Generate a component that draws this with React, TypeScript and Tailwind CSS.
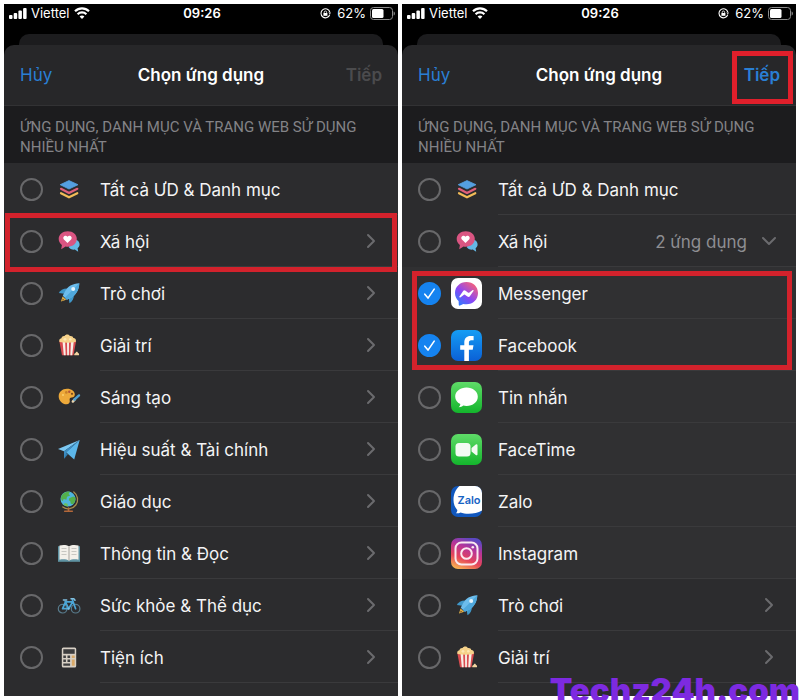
import React, { useState } from 'react';
import { ChevronDown, ChevronRight } from 'lucide-react';

type IconName =
  | 'layers' | 'social' | 'rocket' | 'popcorn' | 'palette' | 'plane' | 'globe' | 'book' | 'bike' | 'calculator'
  | 'messenger' | 'facebook' | 'messages' | 'facetime' | 'zalo' | 'instagram';

interface Item {
  icon: IconName;
  label: string;
  chevron?: 'right' | 'down';
  detail?: string;
  checked?: boolean;
  app?: boolean;
  highlighted?: boolean;
}

// 24x24 emoji style glyphs
const emojis: Partial<Record<IconName, React.ReactNode>> = {
  layers: (
    <>
      <path d="M4 16.2 12 20.3l8.3-4.1" fill="none" stroke="#f2bc57" strokeWidth="2.2" strokeLinecap="round" strokeLinejoin="round" />
      <path d="M4 11.8 12 16l8.3-4.2" fill="none" stroke="#e0607a" strokeWidth="2.2" strokeLinecap="round" strokeLinejoin="round" />
      <path d="M12 3.6 21 7.7 12 12 3.2 7.7z" fill="#549fe0" stroke="#549fe0" strokeWidth="0.8" strokeLinejoin="round" />
    </>
  ),
  social: (
    <>
      <path d="M18.5 10.5c3 .8 4.6 3.6 4 6-.3 1.2-1 2.1-1.9 2.7l.6 3.5-3.4-2.1c-2.6.3-5.2-.7-6.2-2.6z" fill="#64b9e6" />
      <path d="M10.8 2.3c5.2 0 9 3.3 9 7.7s-3.8 7.7-9 7.7c-.8 0-1.5-.1-2.2-.2L4.2 20.3l.7-4.4C2.9 14.5 1.7 12.4 1.7 10c0-4.4 3.9-7.7 9.1-7.7z" fill="#da5582" />
      <path d="M10.5 14 6.9 10.4C4.8 8 8.6 5.2 10.5 7.7c1.9-2.5 5.7.3 3.6 2.7z" fill="#fff" />
    </>
  ),
  rocket: (
    <>
      <path d="M10 7.5C6 7.5 3.2 9.5 1.8 12l5.4.8z" fill="#3f97c9" />
      <path d="M16.8 14c.3 3.5-1.5 6.5-4.3 8.3l-.8-5.2z" fill="#3f97c9" />
      <path d="M22.3 2.2C15.5 2.4 10.5 5.4 7.6 11l-1.8 3.7 4 4L13.6 17c5.5-3 8.4-8 8.7-14.8z" fill="#6cbdec" />
      <path d="M22.3 2.2c-.3 6.8-3.2 11.8-8.7 14.8l-3.8 1.7-2-2z" fill="#4fa8dc" />
      <circle cx="16.2" cy="8.1" r="2" fill="#e4f3fb" />
      <path d="M5.5 15.5 4 20.5l5.2-1.7z" fill="#e9b94b" />
      <path d="m5.7 17.5-.8 2.2 2.5-.9z" fill="#8a5b2a" />
    </>
  ),
  popcorn: (
    <>
      <path d="M2.3 8h16.8l-2.6 14.2H5z" fill="#d94b4f" />
      <path d="m5.5 8 1.3 14.2h1.9L8.1 8zM10 8l.2 14.2h1.7L12 8zM14 8l-.7 14.2h1.9L16.8 8z" fill="#f7eee6" />
      <path d="M2.6 9.1c-1-2 0-3.7 1.8-3.9C4.8 3.3 6.3 2.7 7.6 3c.8-1.8 4-2.2 5.2 0 1.9-.4 3.3.6 3.5 2.1 2.2.1 3.4 2.1 2.3 4-5 .9-11 .9-16 0z" fill="#f6d28a" />
      <circle cx="8" cy="6.3" r="1.4" fill="#fde7b4" />
      <circle cx="13.3" cy="6.2" r="1.3" fill="#fde7b4" />
      <path d="M17.3 22.2c-.4-1.5.4-2.2 1.3-2.3.2-1.7 2.3-1.5 2.3 0 1.2.2 1.5 1.3 1 2.3z" fill="#f3d4a0" />
    </>
  ),
  palette: (
    <>
      <path d="M10 3.8c4.6 0 7.8 2.5 7.8 5.8 0 2-1.3 2.8-3 2.8-1.9 0-2.5 1.3-2.1 2.9.6 2.1-.7 4-3.2 4-4 0-7.8-3.5-7.8-7.8C1.7 7 5.3 3.8 10 3.8z" fill="#eda93a" />
      <circle cx="12.3" cy="6.8" r="1.2" fill="#b4553a" />
      <circle cx="9.3" cy="7.4" r="1.3" fill="#c8812a" />
      <circle cx="15" cy="8.8" r="1.1" fill="#7a4a20" />
      <circle cx="6" cy="10" r="1.1" fill="#f8cd6b" />
      <path d="m15.8 16.6 2.2-2.5" stroke="#e9d5b0" strokeWidth="2.4" strokeLinecap="round" />
      <path d="m17.3 14.7 4.7-4.3" stroke="#4c9fd2" strokeWidth="2.4" strokeLinecap="round" />
    </>
  ),
  plane: (
    <>
      <path d="m7 13.5.2 8.2 3.6-4.3z" fill="#2f7cae" />
      <path d="M22.7 3 1 12l6 2.3z" fill="#7cc8f2" />
      <path d="M22.7 3 9 15.3l8.2 7.2z" fill="#5cb7ea" />
      <path d="M22.7 3 7 14.3l.2 7.4 2.2-6.2z" fill="#3c8dc2" />
    </>
  ),
  globe: (
    <>
      <path d="M16.8 3a9.3 9.3 0 0 1-11 15" fill="none" stroke="#a58b4c" strokeWidth="1.3" strokeLinecap="round" />
      <circle cx="11" cy="10" r="7.5" fill="#4fb5dc" />
      <path d="M5 6c2-2.8 5.5-4 8-3.3l-1.5 2.4 1.7 1.5-3.2 1.2-.6 3-2.7-.7-1.2 2.2C3.6 10.5 3.7 8 5 6z" fill="#53b04c" />
      <path d="m12.2 9.2 4-1.6 2.2 1c.4 2.3-.4 4.9-2.4 6.7l-2.2-.5-.5-2.6-1.5-1z" fill="#53b04c" />
      <path d="m8 14 2.5.8.5 2.6c-1.7 0-3.5-.7-4.6-1.8z" fill="#6ac05d" />
      <path d="M11.5 19v2.5M7.7 22.2h7.6" stroke="#b3683a" strokeWidth="1.6" strokeLinecap="round" />
    </>
  ),
  book: (
    <>
      <path d="M1 5.2h22v15.6H1z" fill="#5f93a3" />
      <path d="M2.5 4.5c3.5-1 7-.8 9.5.8 2.5-1.6 6-1.8 9.5-.8v14.3c-3.5-.8-7-.6-9.5.9-2.5-1.5-6-1.7-9.5-.9z" fill="#f3f0ea" />
      <path d="M12 5.3v14.4" stroke="#a6a39d" strokeWidth="1" />
      <path d="M4.5 7.5h5M4.5 10.5h5M4.5 13.5h5M14.5 7.5h5M14.5 10.5h5M14.5 13.5h5" stroke="#bdbcb8" strokeWidth="0.8" />
    </>
  ),
  bike: (
    <g fill="none" strokeLinecap="round" strokeLinejoin="round">
      <circle cx="5.6" cy="15.7" r="4.3" stroke="#587b8c" strokeWidth="1.2" />
      <circle cx="18.6" cy="15.7" r="4.3" stroke="#587b8c" strokeWidth="1.2" />
      <path d="m5.6 15.7 2.9-6.9h7.3l-4.2 6.9zM8.2 8.3l3.4 7.4M18.6 15.7 15.3 6.5" stroke="#4ba6d7" strokeWidth="1.7" />
      <path d="M6.4 7h3.3M14 5.7h2.8l1.2 1.6" stroke="#80bfe0" strokeWidth="1.5" />
      <circle cx="11.6" cy="15.7" r="1.1" fill="#80bfe0" />
    </g>
  ),
  calculator: (
    <>
      <rect x="4.8" y="2.5" width="14.4" height="20" rx="1.5" fill="#d8d0c5" />
      <rect x="6.3" y="4.2" width="11.4" height="4.6" fill="#3c3c3d" />
      <path d="M6.3 10.6h2.6V13H6.3zM10.5 10.6h2.6V13h-2.6zM6.3 14.5h2.6v2.4H6.3zM10.5 14.5h2.6v2.4h-2.6zM6.3 18.4h6.8v2.3H6.3z" fill="#404041" />
      <path d="M14.8 10.6h2.9V13h-2.9zM14.8 14.5h2.9v6.2h-2.9z" fill="#d9a968" />
    </>
  ),
};

// 31x31 app tiles
const apps: Partial<Record<IconName, React.ReactNode>> = {
  messenger: (
    <>
      <linearGradient id="msgr" x1="0" y1="1" x2="0.8" y2="0">
        <stop offset="0" stopColor="#1689ff" />
        <stop offset="0.5" stopColor="#8a46f5" />
        <stop offset="1" stopColor="#fb6275" />
      </linearGradient>
      <rect width="31" height="31" rx="7" fill="#fff" />
      <path d="M15.5 4C9 4 4 8.7 4 15c0 3.3 1.4 6.2 3.6 8.1l.2 3.8c0 .6.6 1 1.2.7l3.3-1.7c1 .3 2.1.4 3.2.4C22 26.3 27 21.4 27 15S22 4 15.5 4z" fill="url(#msgr)" />
      <path d="m8.4 18.6 3.6-5.3a1.8 1.8 0 0 1 2.6-.5l2.6 1.9c.3.2.6.2.9 0l3.6-2.6c.6-.4 1.1.2.8.8L19 18.1a1.8 1.8 0 0 1-2.6.5l-2.5-1.9a.8.8 0 0 0-.9 0l-3.7 2.7c-.6.4-1.3-.2-.9-.8z" fill="#fff" />
    </>
  ),
  facebook: (
    <>
      <linearGradient id="fb" x1="0" y1="0" x2="0" y2="1">
        <stop offset="0" stopColor="#159df4" />
        <stop offset="1" stopColor="#0b60d6" />
      </linearGradient>
      <rect width="31" height="31" rx="7" fill="url(#fb)" />
      <path d="M13.3 31V19.8H9.2v-4.6h4.1v-2.7c0-4.3 2.3-6.6 6.2-6.6 1.3 0 2.5.1 3.1.2v4.2h-2.3c-1.8 0-2.4.9-2.4 2.5v2.4h4.6l-.8 4.6h-3.8V31z" fill="#fff" />
    </>
  ),
  messages: (
    <>
      <linearGradient id="sms" x1="0" y1="0" x2="0" y2="1">
        <stop offset="0" stopColor="#5fdb68" />
        <stop offset="1" stopColor="#13b52c" />
      </linearGradient>
      <rect width="31" height="31" rx="7" fill="url(#sms)" />
      <path d="M15.5 5.5c6.4 0 11.3 4 11.3 9.2s-4.9 9.2-11.3 9.2c-1.2 0-2.3-.1-3.3-.4-1 .9-2.6 1.7-4.5 1.8 1-.9 1.6-2.1 1.6-3.2-3.1-1.6-5.1-4.3-5.1-7.4 0-5.2 4.9-9.2 11.3-9.2z" fill="#fff" />
    </>
  ),
  facetime: (
    <>
      <linearGradient id="ft" x1="0" y1="0" x2="0" y2="1">
        <stop offset="0" stopColor="#5fdb68" />
        <stop offset="1" stopColor="#13b52c" />
      </linearGradient>
      <rect width="31" height="31" rx="7" fill="url(#ft)" />
      <rect x="4.5" y="9" width="15" height="13.5" rx="3.5" fill="#f3fbf3" />
      <path d="m20.5 14 4.3-3.5c.8-.7 1.7-.3 1.7.7v9c0 1-.9 1.4-1.7.7l-4.3-3.4z" fill="#f3fbf3" />
    </>
  ),
  zalo: (
    <>
      <rect width="31" height="31" rx="7" fill="#1157bd" />
      <path d="M8.5 0H24a7 7 0 0 1 7 7v17.5c-3.8 2.2-8.5 3.3-13.5 3.3-3 0-5.7-.5-8-1.4-1.2.7-2.8 1-4.5.8 1-.9 1.4-2 1.3-3.3C3.8 21.3 2.5 18 2.5 14 2.5 8 4.7 3.2 8.5 0z" fill="#fff" />
      <text x="18" y="18" textAnchor="middle" fontSize="11" fontWeight="600" fill="#1764c4">Zalo</text>
    </>
  ),
  instagram: (
    <>
      <linearGradient id="ig" x1="0.2" y1="1" x2="0.6" y2="0">
        <stop offset="0" stopColor="#f9b552" />
        <stop offset="0.35" stopColor="#e5455a" />
        <stop offset="0.7" stopColor="#b7349a" />
        <stop offset="1" stopColor="#5b48c2" />
      </linearGradient>
      <rect width="31" height="31" rx="7" fill="url(#ig)" />
      <rect x="4.5" y="4.5" width="22" height="22" rx="6" fill="none" stroke="#fbe9f0" strokeWidth="2" />
      <circle cx="15.5" cy="15.5" r="5.3" fill="none" stroke="#fbe9f0" strokeWidth="2" />
      <circle cx="21.8" cy="9.3" r="1.3" fill="#fbe9f0" />
    </>
  ),
};

const categories: Item[] = [
  { icon: 'layers', label: 'Tất cả ƯD & Danh mục' },
  { icon: 'social', label: 'Xã hội', chevron: 'right', highlighted: true },
  { icon: 'rocket', label: 'Trò chơi', chevron: 'right' },
  { icon: 'popcorn', label: 'Giải trí', chevron: 'right' },
  { icon: 'palette', label: 'Sáng tạo', chevron: 'right' },
  { icon: 'plane', label: 'Hiệu suất & Tài chính', chevron: 'right' },
  { icon: 'globe', label: 'Giáo dục', chevron: 'right' },
  { icon: 'book', label: 'Thông tin & Đọc', chevron: 'right' },
  { icon: 'bike', label: 'Sức khỏe & Thể dục', chevron: 'right' },
  { icon: 'calculator', label: 'Tiện ích', chevron: 'right' },
];

const expanded: Item[] = [
  { icon: 'layers', label: 'Tất cả ƯD & Danh mục' },
  { icon: 'social', label: 'Xã hội', chevron: 'down', detail: '2 ứng dụng' },
  { icon: 'messenger', label: 'Messenger', app: true, checked: true },
  { icon: 'facebook', label: 'Facebook', app: true, checked: true },
  { icon: 'messages', label: 'Tin nhắn', app: true },
  { icon: 'facetime', label: 'FaceTime', app: true },
  { icon: 'zalo', label: 'Zalo', app: true },
  { icon: 'instagram', label: 'Instagram', app: true },
  { icon: 'rocket', label: 'Trò chơi', chevron: 'right' },
  { icon: 'popcorn', label: 'Giải trí', chevron: 'right' },
];

const StatusBar: React.FC = () => (
  <div className="grid h-[18px] grid-cols-3 items-center pr-[3px] pl-[5px] text-[13px] leading-none text-white">
    <div className="flex items-center gap-1">
      <svg width="18" height="11" viewBox="0 0 18 11" fill="#fff">
        <rect x="0" y="7" width="3.5" height="4" rx="1" />
        <rect x="4.7" y="5" width="3.5" height="6" rx="1" />
        <rect x="9.4" y="2.5" width="3.5" height="8.5" rx="1" />
        <rect x="14.1" y="0" width="3.5" height="11" rx="1" />
      </svg>
      <span>Viettel</span>
      <svg width="16" height="12" viewBox="0 0 16 12" fill="none" stroke="#fff" strokeWidth="2.2">
        <path d="M1 4.3c4-3.9 10-3.9 14 0" />
        <path d="M3.6 7.2c2.5-2.4 6.3-2.4 8.8 0" />
        <path d="M8 12 5.6 9.4c1.3-1.2 3.5-1.2 4.8 0z" fill="#fff" stroke="none" />
      </svg>
    </div>
    <span className="text-center font-semibold">09:26</span>
    <div className="flex items-center justify-end gap-1">
      <svg width="11" height="11" viewBox="0 0 11 11" fill="none" stroke="#fff">
        <path d="M9.8 6.6A4.5 4.5 0 1 1 9.8 4" strokeWidth="1.1" />
        <path d="M8.3 4.5H11L9.9 6.3z" fill="#fff" stroke="none" />
        <rect x="3.4" y="5" width="4" height="2.8" fill="#fff" stroke="none" />
        <path d="M4.2 5V4.2a1.2 1.2 0 0 1 2.4 0V5" strokeWidth="0.8" />
      </svg>
      <span className="ml-0.5">62%</span>
      <svg width="25" height="13" viewBox="0 0 25 13">
        <rect x="0.5" y="0.5" width="22" height="12" rx="3" fill="none" stroke="#8b8b8b" />
        <rect x="2" y="2" width="11.5" height="9" rx="1.5" fill="#fff" />
        <path d="M23.6 4.5v4c.9-.3 1.3-1 1.3-2s-.4-1.7-1.3-2z" fill="#8b8b8b" />
      </svg>
    </div>
  </div>
);

const Row: React.FC<{ item: Item; id: string; checked: boolean; onToggle: () => void }> = ({ item, id, checked, onToggle }) => (
  <li className={`relative flex h-[52px] items-center pl-4 ${item.highlighted ? 'z-10' : ''} ${item.app ? 'bg-[#303032]' : 'bg-[#2c2c2e]'}`}>
    <span className="relative size-[23px] shrink-0">
      <input
        id={id}
        type="checkbox"
        checked={checked}
        onChange={onToggle}
        className="block size-full appearance-none rounded-full border-2 border-[#68686a] checked:border-[#1583f0] checked:bg-[#1583f0]"
      />
      {checked && (
        <svg className="pointer-events-none absolute inset-0" viewBox="0 0 23 23" fill="none" stroke="#fff" strokeWidth="1.6" strokeLinecap="round" strokeLinejoin="round">
          <path d="m6.8 12.2 3.2 3.9 6.2-9" />
        </svg>
      )}
    </span>
    <span className="mr-4 ml-2.5 flex w-[31px] shrink-0 justify-center">
      {item.app ? (
        <svg className="size-[31px]" viewBox="0 0 31 31">{apps[item.icon]}</svg>
      ) : (
        <svg className="size-6" viewBox="0 0 24 24">{emojis[item.icon]}</svg>
      )}
    </span>
    <div className="flex h-full min-w-0 flex-1 items-center border-b border-[#3a3a3c] pr-[15px]">
      <label htmlFor={id} className="flex-1 pt-1 text-[17px] text-[#f4f4f5]">{item.label}</label>
      {item.detail && <span className="mr-2.5 pt-1 text-[17px] text-[#8e8e92]">{item.detail}</span>}
      {item.chevron && (
        <button type="button" aria-label={`Mở ${item.label}`} className="text-[#6b6b6e]">
          {item.chevron === 'down' ? <ChevronDown size={24} /> : <ChevronRight size={24} />}
        </button>
      )}
    </div>
    {item.highlighted && (
      <div className="pointer-events-none absolute -top-0.5 right-px -bottom-[5px] left-px border-5 border-[#d3222c]" />
    )}
  </li>
);

interface PhoneProps {
  name: string;
  items: Item[];
  canContinue?: boolean;
}

const Phone: React.FC<PhoneProps> = ({ name, items, canContinue }) => {
  const [selected, setSelected] = useState(items.map((item) => !!item.checked));

  const toggle = (index: number) => {
    setSelected(selected.map((value, i) => (i === index ? !value : value)));
  };

  return (
    <section className="flex min-w-0 flex-1 flex-col bg-black">
      <StatusBar />
      <div className="mx-[15px] mt-3 h-[11px] rounded-t-[10px] bg-[#1c1c1e]" />
      <header className="grid h-[60px] grid-cols-[1fr_auto_1fr] items-center rounded-t-[10px] bg-[#272729] px-4 pt-0.5 text-[17px]">
        <button type="button" className="justify-self-start text-[#2a7fd4]">Hủy</button>
        <h1 className="font-semibold text-white">Chọn ứng dụng</h1>
        <div className="relative justify-self-end">
          <button type="button" disabled={!canContinue} className={`font-semibold ${canContinue ? 'text-[#2a7fd4]' : 'text-[#4b4b4d]'}`}>
            Tiếp
          </button>
          {canContinue && (
            <div className="pointer-events-none absolute -top-3 -right-[13px] -bottom-[15px] -left-3 border-5 border-[#e01f2b]" />
          )}
        </div>
      </header>
      <h2 className="border-t border-[#323234] bg-[#1c1c1e] px-4 pt-[11px] pb-1.5 font-['Roboto','Liberation_Sans',sans-serif] text-[15px] leading-5 text-[#838387]">
        ỨNG DỤNG, DANH MỤC VÀ TRANG WEB SỬ DỤNG NHIỀU NHẤT
      </h2>
      <div className="relative flex-1 bg-[#2c2c2e]">
        <ul>
          {items.map((item, index) => (
            <Row key={item.label} item={item} id={`${name}-${index}`} checked={selected[index]} onToggle={() => toggle(index)} />
          ))}
        </ul>
        {canContinue && (
          <div className="pointer-events-none absolute top-[108px] right-1 left-2.5 h-[99px] border-5 border-[#d3222c]" />
        )}
      </div>
    </section>
  );
};

const App: React.FC = () => {
  return (
    <main className="relative flex h-screen gap-1 overflow-hidden bg-white p-1 font-['Inter','Liberation_Sans',sans-serif]">
      <Phone name="categories" items={categories} />
      <Phone name="apps" items={expanded} canContinue />
      <p className="absolute right-0 -bottom-0.5 text-[33px] leading-6 font-black text-[#7d2ae0]">
        Techz24h.com
      </p>
    </main>
  );
};

export default App;
